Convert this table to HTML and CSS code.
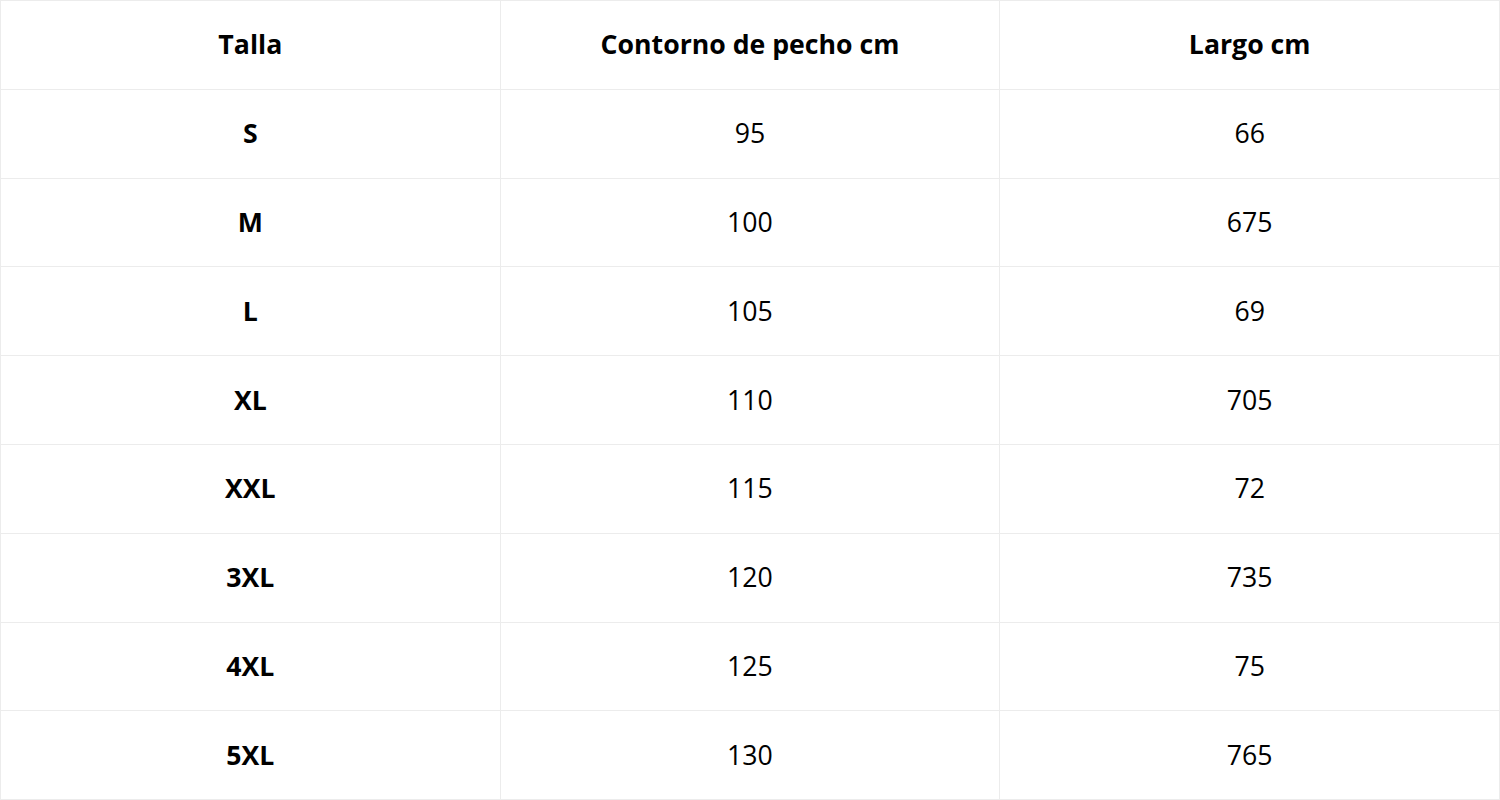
FILE: index.html
```html
<!DOCTYPE html>
<html lang="es">
<head>
<meta charset="utf-8">
<title>Tabla de tallas</title>
<link rel="stylesheet" href="styles.css">
</head>
<body>
<table class="sizes">
  <thead>
    <tr><th>Talla</th><th>Contorno de pecho cm</th><th>Largo cm</th></tr>
  </thead>
  <tbody>
    <tr><th>S</th><td>95</td><td>66</td></tr>
    <tr><th>M</th><td>100</td><td>675</td></tr>
    <tr><th>L</th><td>105</td><td>69</td></tr>
    <tr><th>XL</th><td>110</td><td>705</td></tr>
    <tr><th>XXL</th><td>115</td><td>72</td></tr>
    <tr><th>3XL</th><td>120</td><td>735</td></tr>
    <tr><th>4XL</th><td>125</td><td>75</td></tr>
    <tr><th>5XL</th><td>130</td><td>765</td></tr>
  </tbody>
</table>
</body>
</html>
```
FILE: styles.css
```css
html, body {
  margin: 0;
  padding: 0;
  background: #fff;
}
.sizes {
  width: 1500px;
  height: 800px;
  border-collapse: collapse;
  table-layout: fixed;
  font-family: "Open Sans", "Liberation Sans", sans-serif;
  font-size: 26.67px;
  color: #000;
}
.sizes tr {
  height: 88.8px;
}
.sizes th,
.sizes td {
  border: 1px solid #ececec;
  text-align: center;
  vertical-align: middle;
  padding: 0 0 2px;
}
.sizes th {
  font-weight: 700;
}
.sizes td {
  font-weight: 400;
}
```
